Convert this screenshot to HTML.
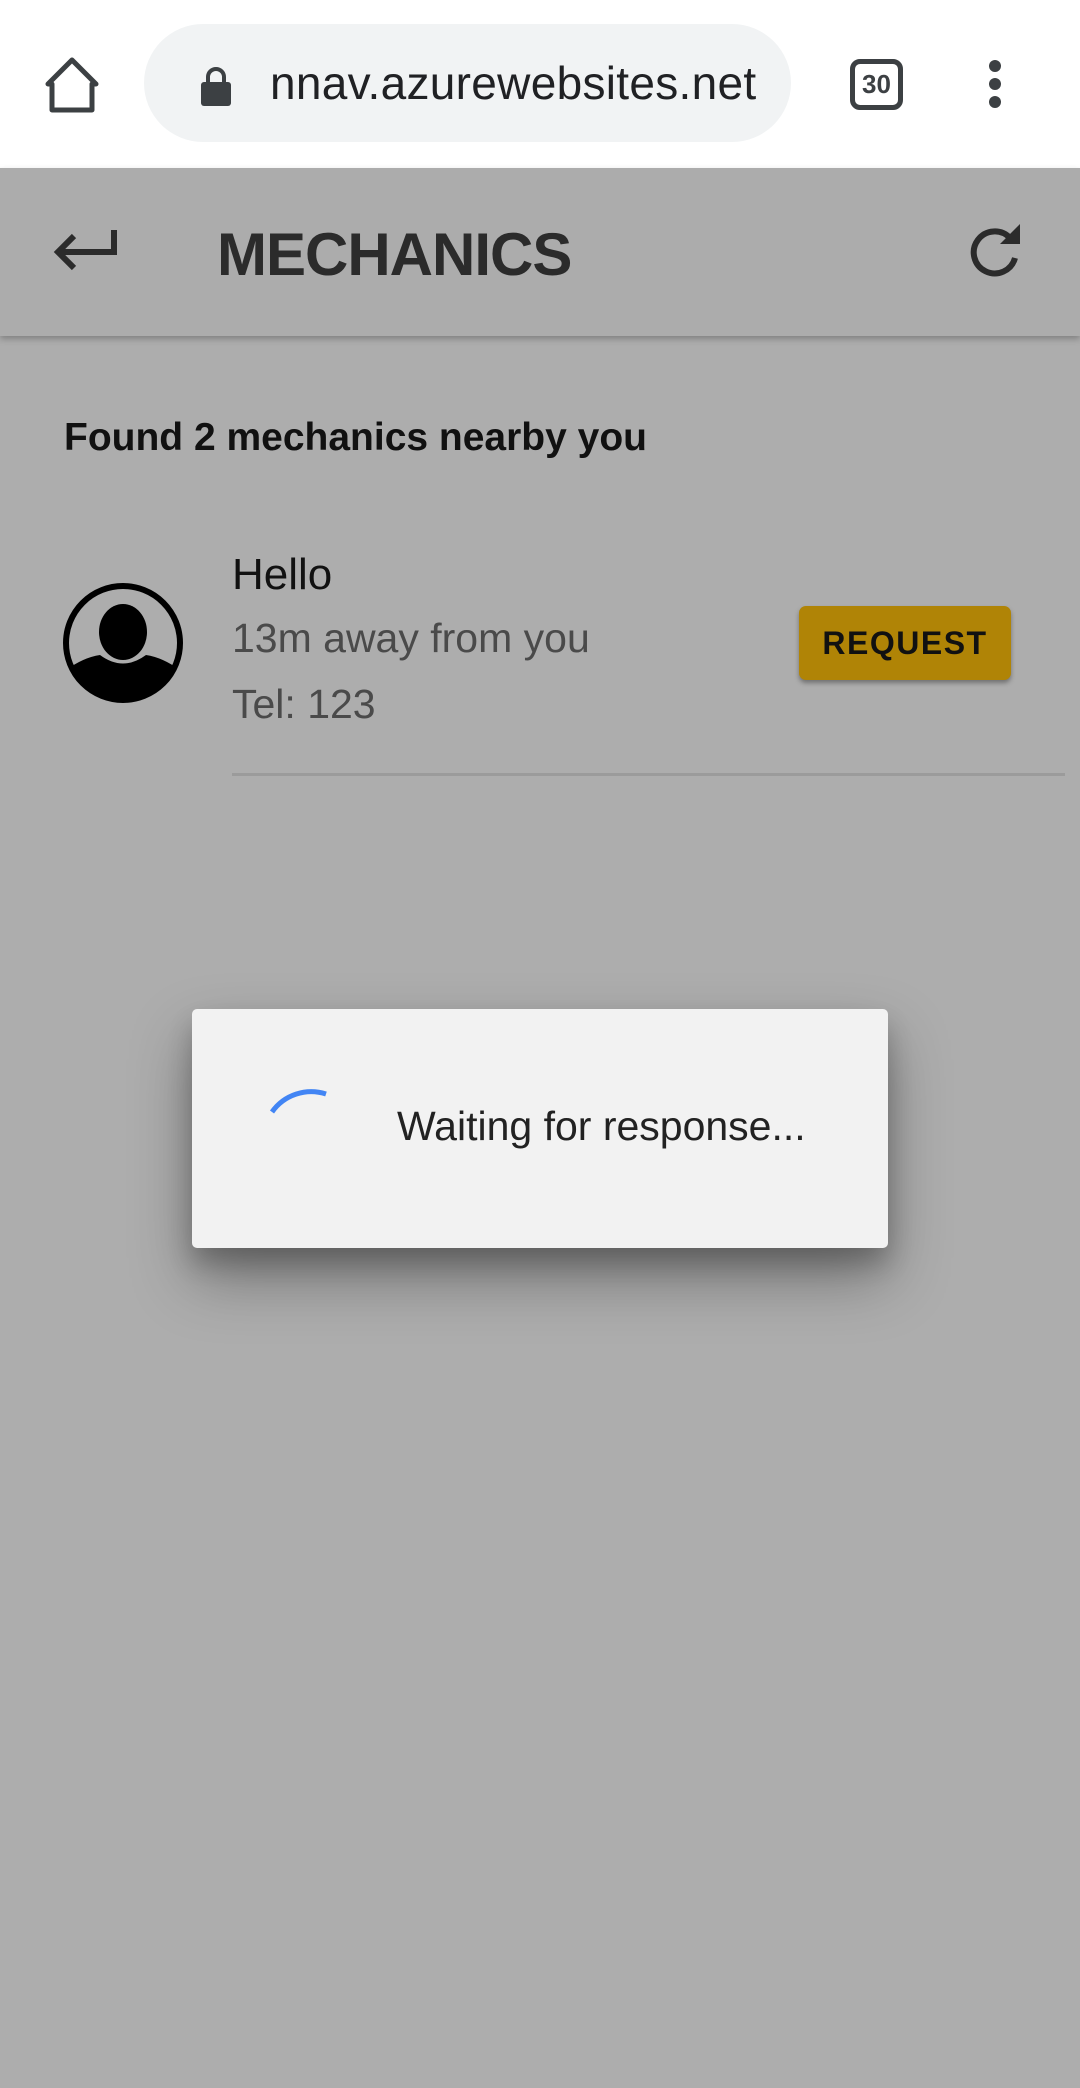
<!DOCTYPE html>
<html><head><meta charset="utf-8"><style>
*{margin:0;padding:0;box-sizing:border-box}
html,body{width:1080px;height:2088px;overflow:hidden;background:#adadad;font-family:"Liberation Sans",Roboto,sans-serif}
.abs{position:absolute}
#top{left:0;top:0;width:1080px;height:168px;background:#fff}
#pill{left:144px;top:24px;width:647px;height:118px;border-radius:59px;background:#f1f3f4;overflow:hidden}
#url{left:126px;top:32px;font-size:46px;color:#202124;white-space:nowrap;letter-spacing:0.3px}
#appbar{left:0;top:168px;width:1080px;height:168px;background:#acacac;box-shadow:0 3px 6px rgba(0,0,0,.25)}
#title{left:217px;font-size:60px;font-weight:bold;color:#2b2b2b;letter-spacing:-1px}
#found{left:64px;top:416px;font-size:39px;font-weight:bold;color:#111}
.t{left:232px;white-space:nowrap}
#req{left:799px;top:606px;width:212px;height:74px;background:#b08406;border-radius:7px;box-shadow:0 3px 5px rgba(0,0,0,.35);font-size:32px;font-weight:bold;letter-spacing:1.5px;color:#111;text-align:center;line-height:74px}
#div{left:232px;top:773px;width:833px;height:3px;background:#9b9b9b}
#dlg{left:192px;top:1009px;width:696px;height:239px;background:#f2f2f2;border-radius:5px;box-shadow:0 30px 60px rgba(0,0,0,.35),0 15px 25px rgba(0,0,0,.2)}
#wait{left:397px;top:1103px;font-size:41px;color:#222;white-space:nowrap}
</style></head><body>
<div id="top" class="abs">
 <svg class="abs" style="left:40px;top:52px" width="64" height="64" viewBox="0 0 64 64"><path d="M32 8 L8 32 H12 V58 H52 V32 H56 Z" fill="none" stroke="#3c4043" stroke-width="5" stroke-linejoin="round"/></svg>
 <div id="pill" class="abs">
  <svg class="abs" style="left:54px;top:43px" width="36" height="40" viewBox="0 0 36 40"><path d="M10 16 V10 a8 8 0 0 1 16 0 V16" fill="none" stroke="#3c4043" stroke-width="4"/><rect x="3" y="15" width="30" height="24" rx="3" fill="#3c4043"/></svg>
  <div id="url" class="abs">nnav.azurewebsites.net</div>
 </div>
 <div class="abs" style="left:850px;top:59px;width:53px;height:51px;border:5px solid #3c4043;border-radius:10px;font-size:26px;font-weight:bold;color:#3c4043;text-align:center;line-height:41px">30</div>
 <div class="abs" style="left:989px;top:60px;width:12px;height:12px;border-radius:6px;background:#3c4043"></div>
 <div class="abs" style="left:989px;top:78px;width:12px;height:12px;border-radius:6px;background:#3c4043"></div>
 <div class="abs" style="left:989px;top:96px;width:12px;height:12px;border-radius:6px;background:#3c4043"></div>
</div>
<div id="appbar" class="abs">
 <svg class="abs" style="left:50px;top:58px" width="70" height="50" viewBox="0 0 70 50"><path d="M64 4 V26 H10 M24 10 L8 26 L24 42" fill="none" stroke="#2b2b2b" stroke-width="6"/></svg>
 <div id="title" class="abs" style="top:52px">MECHANICS</div>
 <svg class="abs" style="left:966px;top:56px" width="60" height="56" viewBox="0 0 60 56"><path d="M44 14 A21 21 0 1 0 49 34" fill="none" stroke="#2b2b2b" stroke-width="6"/><path d="M34 20 L54 20 L54 0 Z" fill="#2b2b2b"/></svg>
</div>
<div id="found" class="abs">Found 2 mechanics nearby you</div>
<svg class="abs" style="left:60px;top:580px" width="126" height="126" viewBox="0 0 126 126"><defs><clipPath id="c"><circle cx="63" cy="63" r="57"/></clipPath></defs><circle cx="63" cy="63" r="57" fill="none" stroke="#000" stroke-width="6"/><g clip-path="url(#c)"><ellipse cx="63" cy="52" rx="24" ry="28" fill="#000"/><path d="M0 130 V95 Q20 78 40 75 Q63 92 86 75 Q106 78 126 95 V130 Z" fill="#000"/></g></svg>
<div class="abs t" style="top:550px;font-size:44px;color:#111">Hello</div>
<div class="abs t" style="top:615px;font-size:41px;color:#4a4a4a">13m away from you</div>
<div class="abs t" style="top:681px;font-size:41px;color:#4a4a4a">Tel: 123</div>
<div id="req" class="abs">REQUEST</div>
<div id="div" class="abs"></div>
<div id="dlg" class="abs"></div>
<svg class="abs" style="left:250px;top:1080px" width="100" height="60" viewBox="0 0 100 60"><path d="M22 32 A48 48 0 0 1 76 14" fill="none" stroke="#4285f4" stroke-width="5"/></svg>
<div id="wait" class="abs">Waiting for response...</div>
</body></html>
